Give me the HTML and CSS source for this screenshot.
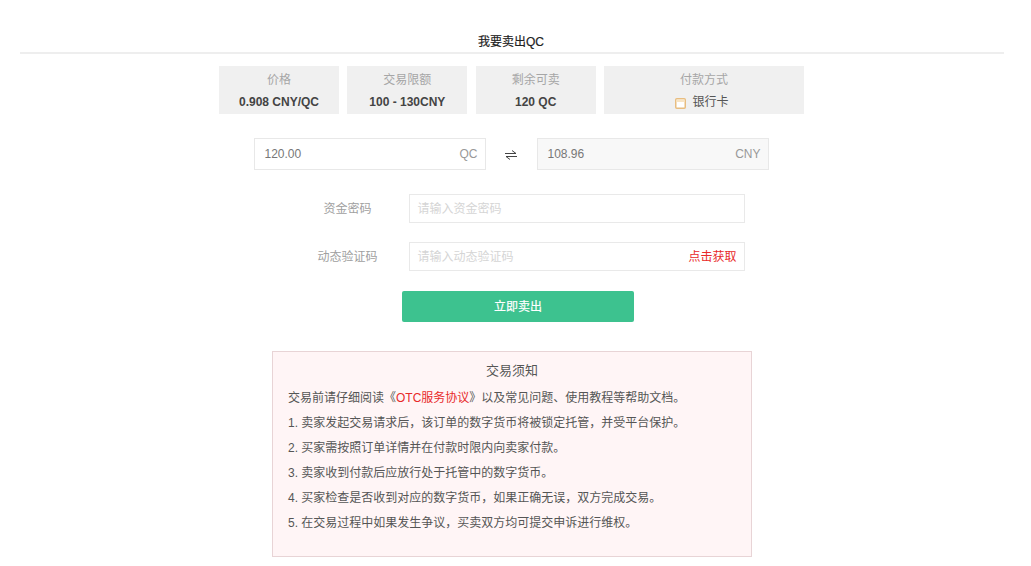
FILE: index.html
```html
<!DOCTYPE html>
<html lang="zh">
<head>
<meta charset="utf-8">
<title>我要卖出QC</title>
<link rel="stylesheet" href="styles.css">
</head>
<body>
<main class="page">
  <h1 class="title">我要卖出QC</h1>
  <section class="stats">
    <div class="stat w1"><span class="stat-label">价格</span><strong class="stat-value">0.908 CNY/QC</strong></div>
    <div class="stat w1"><span class="stat-label">交易限额</span><strong class="stat-value">100 - 130CNY</strong></div>
    <div class="stat w1"><span class="stat-label">剩余可卖</span><strong class="stat-value">120 QC</strong></div>
    <div class="stat w2"><span class="stat-label">付款方式</span>
      <span class="stat-pay">
        <svg class="card-icon" width="11" height="11" viewBox="0 0 11 11"><rect x="0.75" y="0.75" width="9.5" height="9.5" rx="1" fill="#fff" stroke="#e8bd80" stroke-width="1.5"/><rect x="1.5" y="1.5" width="8" height="2.5" fill="#f8e4c4"/></svg>
        银行卡
      </span>
    </div>
  </section>
  <section class="convert">
    <div class="amount"><span>120.00</span><span>QC</span></div>
    <svg class="swap" width="12" height="11" viewBox="0 0 12 11"><path d="M0 3.5H11L7 0.5M12 6.5H1L5 9.5" fill="none" stroke="#444" stroke-width="1"/></svg>
    <div class="amount readonly"><span>108.96</span><span>CNY</span></div>
  </section>
  <section class="form">
    <div class="row">
      <span class="label">资金密码</span>
      <div class="field"><span class="placeholder">请输入资金密码</span></div>
    </div>
    <div class="row">
      <span class="label">动态验证码</span>
      <div class="field"><span class="placeholder">请输入动态验证码</span><a class="get-code">点击获取</a></div>
    </div>
  </section>
  <button class="submit" type="button">立即卖出</button>
  <section class="notice">
    <h2 class="notice-title">交易须知</h2>
    <p>交易前请仔细阅读《<span class="red">OTC服务协议</span>》以及常见问题、使用教程等帮助文档。</p>
    <p>1. 卖家发起交易请求后，该订单的数字货币将被锁定托管，并受平台保护。</p>
    <p>2. 买家需按照订单详情并在付款时限内向卖家付款。</p>
    <p>3. 卖家收到付款后应放行处于托管中的数字货币。</p>
    <p>4. 买家检查是否收到对应的数字货币，如果正确无误，双方完成交易。</p>
    <p>5. 在交易过程中如果发生争议，买卖双方均可提交申诉进行维权。</p>
  </section>
</main>
</body>
</html>
```
FILE: styles.css
```css
* { box-sizing: border-box; }
html, body { margin: 0; padding: 0; background: #fff; }
body {
  font-family: "Liberation Sans", "Noto Sans CJK SC", sans-serif;
  font-size: 12px;
  color: #555;
  overflow: hidden;
}
.page {
  width: 984px;
  margin-left: 20px;
  padding-top: 34px;
  display: flex;
  flex-direction: column;
  align-items: center;
}
.title {
  width: 100%;
  height: 20px;
  margin: 0 0 12px;
  padding-right: 2px;
  border-bottom: 2px solid #eee;
  font-size: 12px;
  font-weight: 400;
  line-height: 17px;
  text-align: center;
  color: #222;
  -webkit-text-stroke: 0.2px #222;
}
.stats {
  display: flex;
  gap: 8.33px;
  margin-right: 1px;
}
.stat {
  height: 48px;
  background: #f0f0f0;
  display: flex;
  flex-direction: column;
  align-items: center;
  padding-top: 6px;
}
.w1 { width: 120px; }
.w2 { width: 200px; }
.stat-label { color: #a6a6a6; line-height: 17px; }
.stat-value { margin-top: 5px; line-height: 17px; color: #444; }
.stat-pay { margin-top: 5px; margin-right: 4px; line-height: 17px; color: #555; display: flex; align-items: center; gap: 6px; }
.card-icon { display: block; margin-top: 2px; }
.convert {
  display: flex;
  align-items: center;
  margin-top: 24px;
  margin-right: 2px;
}
.amount {
  width: 232px;
  height: 32px;
  border: 1px solid #e8e8e8;
  display: flex;
  align-items: center;
  justify-content: space-between;
  padding: 0 7px 0 10px;
  color: #777;
}
.amount span:last-child { color: #999; }
.readonly { background: #f8f8f8; }
.swap { margin: 3px 20px 0 19px; }
.form {
  margin-top: 24px;
  margin-left: 38px;
  display: flex;
  flex-direction: column;
  gap: 19px;
}
.row { display: flex; align-items: center; }
.label { width: 60px; margin-right: 31px; padding-bottom: 3px; text-align: center; color: #a0a0a0; white-space: nowrap; }
.field {
  width: 336px;
  height: 29px;
  border: 1px solid #e9e9e9;
  display: flex;
  align-items: center;
  justify-content: space-between;
  padding: 0 7px 3px 8px;
}
.placeholder { color: #d5d5d5; }
.get-code { color: #e82a2a; }
.submit {
  width: 232px;
  height: 31px;
  margin-top: 20px;
  margin-left: 12px;
  padding: 0 0 2px;
  border: 0;
  border-radius: 2px;
  background: #3dc28f;
  color: #fff;
  font: inherit;
  -webkit-text-stroke: 0.2px #fff;
}
.notice {
  width: 480px;
  height: 206px;
  margin-top: 29px;
  padding: 9px 15px 0;
  background: #fff5f6;
  border: 1px solid #e8d4d6;
}
.notice-title {
  margin: 0 0 5px;
  font-size: 13px;
  font-weight: 400;
  line-height: 20px;
  text-align: center;
  color: #555;
}
.notice p { margin: 0; line-height: 25px; color: #555; white-space: nowrap; }
.red { color: #e82a2a; }
```
